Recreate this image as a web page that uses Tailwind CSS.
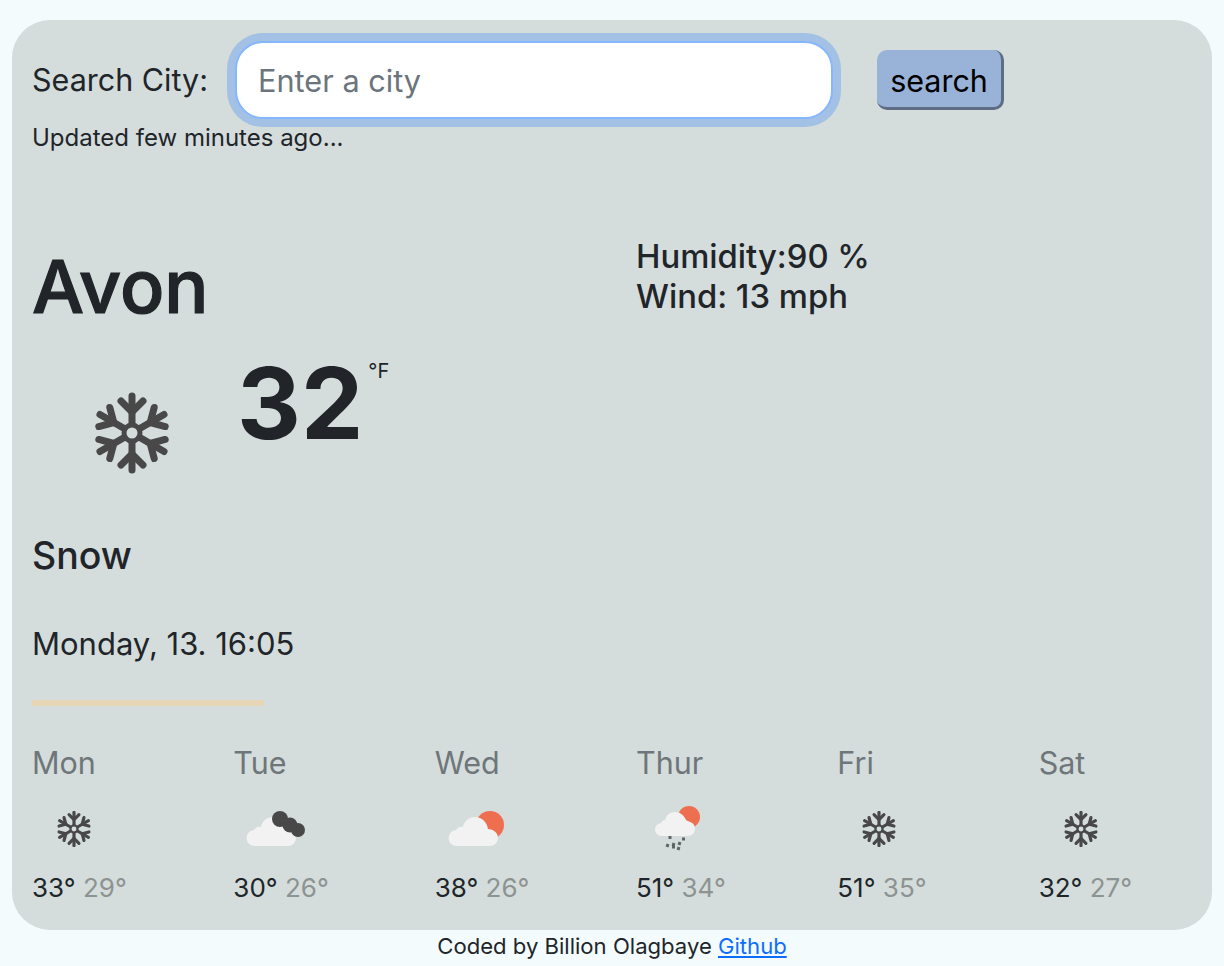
<!DOCTYPE html>
<html lang="en">
<head>
    <meta charset="UTF-8">
    <title>Weather App</title>
    <script src="https://cdn.jsdelivr.net/npm/@tailwindcss/browser@4"></script>
</head>
<body class="bg-[#f3fbfd] text-[#212529] font-['Inter',sans-serif] overflow-hidden">

    <!-- shared icons -->
    <svg width="0" height="0" class="absolute">
        <defs>
            <g id="arm" fill="none" stroke="#484849" stroke-linecap="round" stroke-linejoin="round">
                <path d="M40 30V3" stroke-width="7"/>
                <path d="M29 8l11 11 11-11" stroke-width="7"/>
            </g>
            <g id="snow">
                <use href="#arm"/>
                <use href="#arm" transform="rotate(60 40 40)"/>
                <use href="#arm" transform="rotate(120 40 40)"/>
                <use href="#arm" transform="rotate(180 40 40)"/>
                <use href="#arm" transform="rotate(240 40 40)"/>
                <use href="#arm" transform="rotate(300 40 40)"/>
                <circle cx="40" cy="40" r="8" fill="none" stroke="#484849" stroke-width="5"/>
            </g>
            <path id="cloud" fill="#f1f2f1" d="M8 35a8 8 0 0 1-1-16c1-2 4-4 7-3 1-6 6-10 12-10 7 0 12 5 13 12 4 0 10 3 10 9a8 8 0 0 1-8 8z"/>
        </defs>
    </svg>

    <!-- Card -->
    <div class="mx-3 mt-5 w-[1200px] h-[910px] bg-[#d4dddc] rounded-[38px] pl-5 pt-3">

        <!-- Search -->
        <div class="flex items-center h-[96px]">
            <label class="text-[30.500px] leading-[36px] w-[195px]">Search City:</label>
            <input type="text" placeholder="Enter a city" class="w-[598px] h-[78px] ml-[8px] px-[21px] bg-white border-2 border-[#86b7fe] rounded-[28px] ring-8 ring-[#0d6efd]/25 text-[30.700px] outline-none placeholder:text-[#6c757d]">
            <button class="ml-[44px] w-[127px] h-[60px] pt-[5px] bg-[#99b3d8] rounded-[10px] border-r-[3px] border-b-[3px] border-[#5e6d85] text-[30.500px] text-black">search</button>
        </div>
        <p class="text-[24px] leading-[30px] -mt-[5px]">Updated few minutes ago...</p>

        <!-- Current weather -->
        <div class="flex mt-[86px]">
            <div class="w-[604px]">
                <h1 class="text-[73.500px] leading-[92px] font-medium [-webkit-text-stroke:1.2px_#212529] mt-[2px]">Avon</h1>
                <div class="flex h-[176px]">
                    <svg viewBox="0 0 80 80" class="w-[80px] h-[84px] ml-[60px] mt-[58px]"><use href="#snow"/></svg>
                    <span class="text-[99px] leading-[112px] font-bold ml-[65px] mt-[14px]">32</span>
                    <span class="text-[20px] leading-[22px] ml-[5px] mt-[27px]">°F</span>
                </div>
            </div>
            <div class="text-[32.800px] leading-[40px] font-medium -mt-[3px]">
                <div>Humidity:90 %</div>
                <div>Wind: 13 mph</div>
            </div>
        </div>

        <div class="text-[37.500px] leading-[44px] font-medium mt-[25px]">Snow</div>
        <div class="text-[31px] leading-[38px] mt-[47px]">Monday, 13. 16:05</div>
        <div class="w-[232px] h-[6px] bg-[#e6d6b5] mt-[37px]"></div>

        <!-- Forecast -->
        <div class="flex mt-[37px]">
            <div class="w-[201.33px]">
                <div class="text-[30.500px] leading-[40px] text-[#6f7679]">Mon</div>
                <svg viewBox="0 0 80 80" class="w-[36px] h-[36px] ml-[24px] mt-[28px]"><use href="#snow"/></svg>
                <div class="text-[26px] leading-[30px] mt-[26px]">33° <span class="text-[#8d9391]">29°</span></div>
            </div>
            <div class="w-[201.33px]">
                <div class="text-[30.500px] leading-[40px] text-[#6f7679]">Tue</div>
                <svg viewBox="0 0 60 40" class="w-[60px] h-[40px] ml-[12px] mt-[26px]">
                    <use href="#cloud" transform="translate(2 2)"/>
                    <circle cx="35" cy="10" r="8" fill="#484849"/>
                    <circle cx="45" cy="16" r="7.500" fill="#484849"/>
                    <circle cx="53" cy="21" r="7" fill="#484849"/>
                </svg>
                <div class="text-[26px] leading-[30px] mt-[24px]">30° <span class="text-[#8d9391]">26°</span></div>
            </div>
            <div class="w-[201.33px]">
                <div class="text-[30.500px] leading-[40px] text-[#6f7679]">Wed</div>
                <svg viewBox="0 0 60 40" class="w-[60px] h-[40px] ml-[12px] mt-[26px]">
                    <circle cx="43" cy="16" r="14" fill="#ee6f50"/>
                    <use href="#cloud" transform="translate(2 2)"/>
                </svg>
                <div class="text-[26px] leading-[30px] mt-[24px]">38° <span class="text-[#8d9391]">26°</span></div>
            </div>
            <div class="w-[201.33px]">
                <div class="text-[30.500px] leading-[40px] text-[#6f7679]">Thur</div>
                <svg viewBox="0 0 48 46" class="w-[48px] h-[46px] ml-[19px] mt-[23px]">
                    <circle cx="34" cy="11" r="11" fill="#ee6f50"/>
                    <path fill="#f1f2f1" d="M7 30a6.500 6.500 0 0 1-1-13c1-2 2-3 4-3 1-5 5-8 10-8 5 0 9 3 11 8 3 2 9 2 9 9 0 4-3 7-7 7z"/>
                    <path stroke="#5f6464" stroke-width="3" d="M15 30v3M27 33h3M13 38l-1 3M19 37l-1 3M25 36l-1 3M17 41h3M24 41l-1 3"/>
                </svg>
                <div class="text-[26px] leading-[30px] mt-[21px]">51° <span class="text-[#8d9391]">34°</span></div>
            </div>
            <div class="w-[201.33px]">
                <div class="text-[30.500px] leading-[40px] text-[#6f7679]">Fri</div>
                <svg viewBox="0 0 80 80" class="w-[36px] h-[36px] ml-[24px] mt-[28px]"><use href="#snow"/></svg>
                <div class="text-[26px] leading-[30px] mt-[26px]">51° <span class="text-[#8d9391]">35°</span></div>
            </div>
            <div class="w-[150px]">
                <div class="text-[30.500px] leading-[40px] text-[#6f7679]">Sat</div>
                <svg viewBox="0 0 80 80" class="w-[36px] h-[36px] ml-[24px] mt-[28px]"><use href="#snow"/></svg>
                <div class="text-[26px] leading-[30px] mt-[26px]">32° <span class="text-[#8d9391]">27°</span></div>
            </div>
        </div>
    </div>

    <!-- Footer -->
    <p class="text-center text-[22.100px] leading-[32px]">Coded by Billion Olagbaye <a href="#" class="text-[#0d6efd] underline">Github</a></p>

</body>
</html>
